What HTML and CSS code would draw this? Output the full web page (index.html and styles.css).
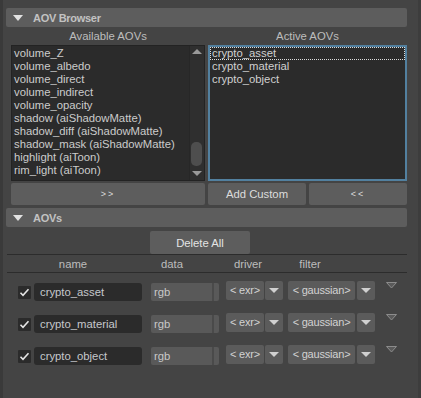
FILE: index.html
```html
<!DOCTYPE html>
<html lang="en">
<head>
  <meta charset="UTF-8" />
  <title>AOV Browser</title>
  <link rel="stylesheet" href="styles.css">
</head>
<body>
  <div class="window">
    <div class="frame-bar"><span class="fold"></span>AOV Browser</div>

    <div class="browser">
      <div class="col col-left">
        <div class="col-label">Available AOVs</div>
        <div class="list">
          <ul class="items">
            <li>volume_Z</li>
            <li>volume_albedo</li>
            <li>volume_direct</li>
            <li>volume_indirect</li>
            <li>volume_opacity</li>
            <li>shadow (aiShadowMatte)</li>
            <li>shadow_diff (aiShadowMatte)</li>
            <li>shadow_mask (aiShadowMatte)</li>
            <li>highlight (aiToon)</li>
            <li>rim_light (aiToon)</li>
          </ul>
          <div class="scrollbar">
            <span class="sb-up"></span>
            <span class="sb-thumb"></span>
            <span class="sb-down"></span>
          </div>
        </div>
        <button class="btn btn-arrows">&gt;&gt;</button>
      </div>

      <div class="col col-right">
        <div class="col-label">Active AOVs</div>
        <div class="list list-active">
          <ul class="items">
            <li class="focused">crypto_asset</li>
            <li>crypto_material</li>
            <li>crypto_object</li>
          </ul>
        </div>
        <div class="btn-row">
          <button class="btn">Add Custom</button>
          <button class="btn btn-arrows">&lt;&lt;</button>
        </div>
      </div>
    </div>

    <div class="frame-bar frame-bar-2"><span class="fold"></span>AOVs</div>

    <div class="delete-row">
      <button class="btn btn-delete">Delete All</button>
    </div>

    <div class="aov-table">
      <div class="table-head">
        <span class="th th-name">name</span>
        <span class="th th-data">data</span>
        <span class="th th-driver">driver</span>
        <span class="th th-filter">filter</span>
      </div>

      <div class="aov-row">
        <span class="check"><svg width="13" height="13" viewBox="0 0 13 13"><path d="M2.5 6.8 L5 9.3 L10.5 3.3" fill="none" stroke="#e6e6e6" stroke-width="1.6"/></svg></span>
        <span class="name-field">crypto_asset</span>
        <span class="data-field"><span class="data-text">rgb</span><span class="data-grip"></span></span>
        <span class="combo combo-driver">&lt; exr&gt;</span>
        <span class="combo-btn"><span class="down"></span></span>
        <span class="combo combo-filter">&lt; gaussian&gt;</span>
        <span class="combo-btn"><span class="down"></span></span>
        <span class="options"><svg width="11" height="7" viewBox="0 0 11 7"><path d="M0.5 0.5 H10.5 L5.5 6 Z" fill="#5a5a5a" stroke="#8c8c8c" stroke-width="1"/></svg></span>
      </div>

      <div class="aov-row">
        <span class="check"><svg width="13" height="13" viewBox="0 0 13 13"><path d="M2.5 6.8 L5 9.3 L10.5 3.3" fill="none" stroke="#e6e6e6" stroke-width="1.6"/></svg></span>
        <span class="name-field">crypto_material</span>
        <span class="data-field"><span class="data-text">rgb</span><span class="data-grip"></span></span>
        <span class="combo combo-driver">&lt; exr&gt;</span>
        <span class="combo-btn"><span class="down"></span></span>
        <span class="combo combo-filter">&lt; gaussian&gt;</span>
        <span class="combo-btn"><span class="down"></span></span>
        <span class="options"><svg width="11" height="7" viewBox="0 0 11 7"><path d="M0.5 0.5 H10.5 L5.5 6 Z" fill="#5a5a5a" stroke="#8c8c8c" stroke-width="1"/></svg></span>
      </div>

      <div class="aov-row">
        <span class="check"><svg width="13" height="13" viewBox="0 0 13 13"><path d="M2.5 6.8 L5 9.3 L10.5 3.3" fill="none" stroke="#e6e6e6" stroke-width="1.6"/></svg></span>
        <span class="name-field">crypto_object</span>
        <span class="data-field"><span class="data-text">rgb</span><span class="data-grip"></span></span>
        <span class="combo combo-driver">&lt; exr&gt;</span>
        <span class="combo-btn"><span class="down"></span></span>
        <span class="combo combo-filter">&lt; gaussian&gt;</span>
        <span class="combo-btn"><span class="down"></span></span>
        <span class="options"><svg width="11" height="7" viewBox="0 0 11 7"><path d="M0.5 0.5 H10.5 L5.5 6 Z" fill="#5a5a5a" stroke="#8c8c8c" stroke-width="1"/></svg></span>
      </div>
    </div>
  </div>
</body>
</html>
```

FILE: styles.css
```css
html, body { margin: 0; padding: 0; background: #444; }
body { font-family: "Liberation Sans", Arial, sans-serif; font-size: 11.3px; color: #c8c8c8; }

.window { width: 421px; height: 398px; box-sizing: border-box; padding: 8px 11px 0 3px; background: #444;
  border-left: 3px solid #3a3a3a; border-right: 3px solid #3d3d3d; overflow: hidden; }

.frame-bar { height: 19px; background: #5d5d5d; border-radius: 2px; display: flex; align-items: center;
  font-weight: bold; font-size: 11px; letter-spacing: -0.3px; color: #c2c2c2; }
.frame-bar-2 { margin-top: 3px; }
.fold { width: 0; height: 0; border-left: 5.5px solid transparent; border-right: 5.5px solid transparent;
  border-top: 6px solid #e2e2e2; margin: 1px 10px 0 7px; }

.browser { display: flex; gap: 3px; padding-left: 5px; }
.col { display: flex; flex-direction: column; }
.col-left { width: 194px; }
.col-right { width: 199px; }
.col-label { height: 18px; line-height: 19px; text-align: center; color: #bdbdbd; }

.list { height: 136px; box-sizing: border-box; background: #2b2b2b; border: 1px solid #232323; display: flex; }
.list-active { border: 2px solid #52809f; }
.items { list-style: none; margin: 0; padding: 1px 0 0 2px; flex: 1; }
.items li { height: 13px; line-height: 13px; white-space: nowrap; color: #cbcbcb; }
.list-active .items { padding: 0; }
.list-active .items li { padding-left: 2px; color: #d0d0d0; }
.list-active .items li.focused { outline: 1px dotted #dcdcdc; outline-offset: -1px; }

.scrollbar { width: 14px; background: #2f2f2f; border-left: 1px solid #272727; position: relative; }
.sb-up, .sb-down { position: absolute; left: 2px; width: 0; height: 0; border-left: 5px solid transparent; border-right: 5px solid transparent; }
.sb-up { top: 3px; border-bottom: 5px solid #9a9a9a; }
.sb-down { bottom: 4px; border-top: 5px solid #9a9a9a; }
.sb-thumb { position: absolute; left: 1px; top: 96px; width: 11px; height: 24px; border-radius: 5px; background: #4e4e4e; }

.btn { height: 22px; margin: 0; padding: 0; border: none; border-radius: 2px; background: #5d5d5d;
  font-family: "Liberation Sans", Arial, sans-serif; font-size: 11.3px; color: #dcdcdc; }
.col .btn { margin-top: 2px; }
.btn-arrows { font-size: 9px; letter-spacing: 2px; }
.btn-row { display: flex; gap: 3px; }
.btn-row .btn { flex: 1; }

.delete-row { padding-left: 144px; margin-top: 4px; }
.btn-delete { width: 100px; height: 23px; color: #e4e4e4; }

.aov-table { margin-left: 1px; }
.table-head { display: flex; height: 17px; border-top: 1px solid #2c2c2c; border-bottom: 1px solid #2c2c2c; }
.th { text-align: center; line-height: 19px; color: #bdbdbd; }
.th-name { width: 132px; }
.th-data { width: 66px; }
.th-driver { width: 86px; }
.th-filter { width: 38px; }

.aov-row { display: flex; height: 20px; padding-left: 11px; margin-top: 8px; }
.aov-row + .aov-row { margin-top: 12px; }

.check { width: 13px; height: 13px; background: #2b2b2b; border-radius: 1px; align-self: center; margin-top: 2px; margin-right: 3px; display: flex; }
.name-field { width: 108px; height: 18px; box-sizing: border-box; align-self: flex-end; background: #2b2b2b; border-radius: 3px;
  padding-left: 6px; line-height: 18px; color: #c6c8cc; }
.data-field { width: 68px; height: 18px; align-self: flex-end; margin-left: 9px; background: #595959; border-radius: 2px; display: flex; }
.data-text { flex: 1; padding-left: 3px; line-height: 18px; color: #c8c8c8; }
.data-grip { width: 5px; border-left: 2px solid #4a4a4a; }

.combo { height: 19px; line-height: 19px; background: #5b5b5b; border-radius: 2px; text-align: center; color: #d2d2d2; font-size: 11px; letter-spacing: -0.2px; }
.combo-driver { width: 38px; margin-left: 7px; }
.combo-filter { width: 67px; margin-left: 5px; }
.combo-btn { width: 18px; height: 19px; margin-left: 1px; background: #5b5b5b; border-radius: 2px; display: flex; justify-content: center; }
.combo-filter + .combo-btn { margin-left: 2px; }
.down { width: 0; height: 0; margin-top: 7px; border-left: 5px solid transparent; border-right: 5px solid transparent; border-top: 5px solid #d0d0d0; }
.options { margin-left: 11px; margin-top: 1px; display: flex; align-items: flex-start; }
```
